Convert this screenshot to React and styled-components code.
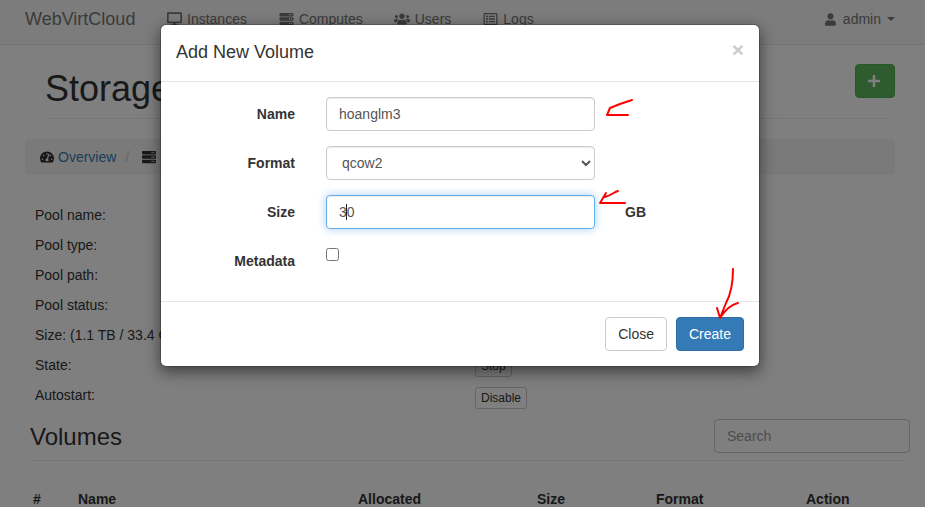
import React from "react";
import styled, { createGlobalStyle } from "styled-components";
import {
  FaDesktop,
  FaServer,
  FaUsers,
  FaRegListAlt,
  FaUser,
  FaTachometerAlt,
  FaPlus,
} from "react-icons/fa";

const GlobalStyle = createGlobalStyle`
  * { box-sizing: border-box; }
  html, body { margin: 0; padding: 0; background: #fff; }
  body {
    font-family: "Liberation Sans", Arial, sans-serif;
    font-size: 14px;
    line-height: 20px;
    color: #333;
  }
`;

const Page = styled.div`
  position: relative;
  width: 925px;
  height: 507px;
  overflow: hidden;
`;

const Navbar = styled.nav`
  display: flex;
  height: 45px;
  padding: 9px 30px 0 25px;
  background: #f8f8f8;
  border-bottom: 1px solid #e7e7e7;
  color: #777;
`;

const Brand = styled.span`
  font-size: 18px;
  width: 127px;
`;

const NavLink = styled.span`
  display: flex;
  align-items: center;
  gap: 5px;
  height: 20px;
  padding: 0 ${({ $pad }) => $pad}px 0 15px;

  svg {
    width: ${({ $icon }) => $icon || 15}px;
    height: 14px;
  }
`;

const UserMenu = styled.span`
  display: flex;
  align-items: center;
  height: 20px;
  margin-left: auto;

  svg {
    width: 11px;
    height: 13px;
    margin-right: 7px;
  }
`;

const Caret = styled.i`
  width: 0;
  height: 0;
  margin-left: 6px;
  border-top: 4px solid #777;
  border-left: 4px solid transparent;
  border-right: 4px solid transparent;
`;

const TitleRow = styled.header`
  display: flex;
  justify-content: space-between;
  align-items: flex-start;
  height: 74px;
  margin: 0 35px 0 45px;
  padding-top: 19px;
  border-bottom: 1px solid #eee;
`;

const Title = styled.h1`
  margin: 5px 0 0;
  font-size: 36px;
  font-weight: 500;
  line-height: 40px;
  color: #333;
`;

const AddButton = styled.button`
  display: flex;
  align-items: center;
  justify-content: center;
  width: 40px;
  height: 34px;
  margin-right: -5px;
  padding: 0 2px 0 0;
  background: #5cb85c;
  border: 1px solid #4cae4c;
  border-radius: 4px;
  color: #fff;

  svg {
    width: 14px;
    height: 14px;
  }
`;

const Breadcrumb = styled.div`
  display: flex;
  align-items: center;
  height: 36px;
  margin: 20px 30px 0 25px;
  padding-left: 15px;
  background: #f5f5f5;
  border-radius: 4px;
  color: #337ab7;

  svg {
    width: 14px;
    height: 14px;
    color: #333;
  }
`;

const CrumbText = styled.span`
  margin-left: 4px;
`;

const CrumbSep = styled.span`
  margin: 0 13px 0 9px;
  color: #ccc;
`;

const PoolList = styled.div`
  display: flex;
  flex-direction: column;
  margin: 30px 0 0 35px;
`;

const PoolRow = styled.div`
  display: grid;
  grid-template-columns: 440px auto;
  height: 30px;
`;

const SmallButton = styled.button`
  justify-self: start;
  height: 22px;
  margin-top: ${({ $top }) => $top}px;
  padding: 0 5px;
  background: #fff;
  border: 1px solid #ccc;
  border-radius: 3px;
  color: #333;
  font: 12px "Liberation Sans", Arial, sans-serif;
`;

const VolumesHead = styled.div`
  display: flex;
  justify-content: space-between;
  align-items: flex-start;
  height: 42px;
  margin: 4px 20px 0 30px;
  border-bottom: 1px solid #eee;
`;

const VolumesTitle = styled.h2`
  margin: 5px 0 0;
  font-size: 24px;
  font-weight: 500;
  line-height: 26px;
  color: #333;
`;

const Search = styled.input`
  width: 196px;
  height: 34px;
  margin-right: -5px;
  padding: 6px 12px;
  background: #fff;
  border: 1px solid #ccc;
  border-radius: 4px;
  font: 14px "Liberation Sans", Arial, sans-serif;

  &::placeholder {
    color: #999;
    opacity: 1;
  }
`;

const TableHead = styled.div`
  display: grid;
  grid-template-columns: 45px 280px 179px 119px 150px auto;
  margin: 28px 0 0 33px;
  font-weight: 700;
`;

const Backdrop = styled.div`
  position: absolute;
  inset: 0;
  background: rgba(0, 0, 0, 0.5);
`;

const Modal = styled.section`
  position: absolute;
  left: 160px;
  top: 24px;
  width: 600px;
  background: #fff;
  border: 1px solid rgba(0, 0, 0, 0.2);
  border-radius: 6px;
  background-clip: padding-box;
  box-shadow: 0 5px 15px rgba(0, 0, 0, 0.5);
`;

const ModalHeader = styled.div`
  display: flex;
  justify-content: space-between;
  align-items: center;
  height: 57px;
  padding: 0 15px;
  border-bottom: 1px solid #e5e5e5;
`;

const ModalTitle = styled.h4`
  margin: -2px 0 0;
  font-size: 18px;
  font-weight: 500;
  line-height: 25px;
  color: #333;
`;

const CloseX = styled.span`
  margin-top: -7px;
  font-size: 21px;
  font-weight: 700;
  line-height: 21px;
  color: #000;
  opacity: 0.2;
  text-shadow: 0 1px 0 #fff;
`;

const ModalForm = styled.div`
  display: grid;
  grid-template-columns: 119px 269px 1fr;
  grid-auto-rows: 34px;
  column-gap: 31px;
  row-gap: 15px;
  padding: 15px 15px 23px;
`;

const FieldLabel = styled.label`
  padding-top: 7px;
  font-weight: 700;
  text-align: right;
`;

const fieldCss = `
  width: 100%;
  height: 34px;
  padding: 6px 12px;
  background: #fff;
  border: 1px solid #ccc;
  border-radius: 4px;
  color: #555;
  font: 14px/20px "Liberation Sans", Arial, sans-serif;
  box-shadow: inset 0 1px 1px rgba(0, 0, 0, 0.075);
  outline: none;
`;

const TextField = styled.input`
  ${fieldCss}
  ${({ $focused }) =>
    $focused &&
    `
    border-color: #66afe9;
    box-shadow: inset 0 1px 1px rgba(0, 0, 0, .075), 0 0 8px rgba(102, 175, 233, .6);
  `}
`;

const SelectField = styled.select`
  ${fieldCss}
  padding-left: 11px;
`;

const FieldWrap = styled.div`
  position: relative;
`;

const TextCaret = styled.i`
  position: absolute;
  left: 20px;
  top: 9px;
  width: 1px;
  height: 16px;
  background: #222;
`;

const Unit = styled.span`
  margin-left: -1px;
  padding-top: 7px;
  font-weight: 700;
`;

const Check = styled.input`
  width: 13px;
  height: 13px;
  margin: 4px 0 0;
`;

const ModalFooter = styled.div`
  display: flex;
  justify-content: flex-end;
  gap: 9px;
  padding: 15px;
  border-top: 1px solid #e5e5e5;
`;

const FooterButton = styled.button`
  height: 34px;
  padding: 6px 12px;
  background: ${({ $primary }) => ($primary ? "#337ab7" : "#fff")};
  border: 1px solid ${({ $primary }) => ($primary ? "#2e6da4" : "#ccc")};
  border-radius: 4px;
  color: ${({ $primary }) => ($primary ? "#fff" : "#333")};
  font: 14px/20px "Liberation Sans", Arial, sans-serif;
`;

const Scribbles = styled.svg`
  position: absolute;
  inset: 0;
  pointer-events: none;

  path {
    fill: none;
    stroke: #fe0000;
    stroke-width: 2;
    stroke-linecap: round;
    stroke-linejoin: round;
  }
`;

const pool = [
  ["Pool name:"],
  ["Pool type:"],
  ["Pool path:"],
  ["Pool status:"],
  ["Size: (1.1 TB / 33.4 GB)"],
  ["State:", "Stop", 0],
  ["Autostart:", "Disable", 2],
];

const columns = ["#", "Name", "Allocated", "Size", "Format", "Action"];

export default function App() {
  return (
    <Page>
      <GlobalStyle />
      <Navbar>
        <Brand>WebVirtCloud</Brand>
        <NavLink $pad={17}><FaDesktop />Instances</NavLink>
        <NavLink $pad={16}><FaServer />Computes</NavLink>
        <NavLink $pad={17} $icon={16}><FaUsers />Users</NavLink>
        <NavLink $pad={15}><FaRegListAlt />Logs</NavLink>
        <UserMenu><FaUser />admin<Caret /></UserMenu>
      </Navbar>

      <TitleRow>
        <Title>Storage</Title>
        <AddButton><FaPlus /></AddButton>
      </TitleRow>

      <Breadcrumb>
        <FaTachometerAlt />
        <CrumbText>Overview</CrumbText>
        <CrumbSep>/</CrumbSep>
        <FaServer />
      </Breadcrumb>

      <PoolList>
        {pool.map(([label, action, top]) => (
          <PoolRow key={label}>
            <span>{label}</span>
            {action && <SmallButton $top={top}>{action}</SmallButton>}
          </PoolRow>
        ))}
      </PoolList>

      <VolumesHead>
        <VolumesTitle>Volumes</VolumesTitle>
        <Search placeholder="Search" />
      </VolumesHead>

      <TableHead>
        {columns.map((c) => (
          <span key={c}>{c}</span>
        ))}
      </TableHead>

      <Backdrop />

      <Modal>
        <ModalHeader>
          <ModalTitle>Add New Volume</ModalTitle>
          <CloseX>×</CloseX>
        </ModalHeader>
        <ModalForm>
          <FieldLabel>Name</FieldLabel>
          <TextField defaultValue="hoanglm3" />
          <span />

          <FieldLabel>Format</FieldLabel>
          <SelectField defaultValue="qcow2">
            <option>qcow2</option>
          </SelectField>
          <span />

          <FieldLabel>Size</FieldLabel>
          <FieldWrap>
            <TextField $focused defaultValue="30" />
            <TextCaret />
          </FieldWrap>
          <Unit>GB</Unit>

          <FieldLabel>Metadata</FieldLabel>
          <div><Check type="checkbox" /></div>
          <span />
        </ModalForm>
        <ModalFooter>
          <FooterButton>Close</FooterButton>
          <FooterButton $primary>Create</FooterButton>
        </ModalFooter>
      </Modal>

      <Scribbles width="925" height="507" viewBox="0 0 925 507">
        <path d="M632 100L620 104L610 108L607 115L628 115" />
        <path d="M606 193L600 203L625 203M618 191C614 192 612 195 605 197" />
        <path d="M733 269C733 285 731 294 726 303L720 318L717 308M720 318C725 310 730 305 738 303" />
      </Scribbles>
    </Page>
  );
}
